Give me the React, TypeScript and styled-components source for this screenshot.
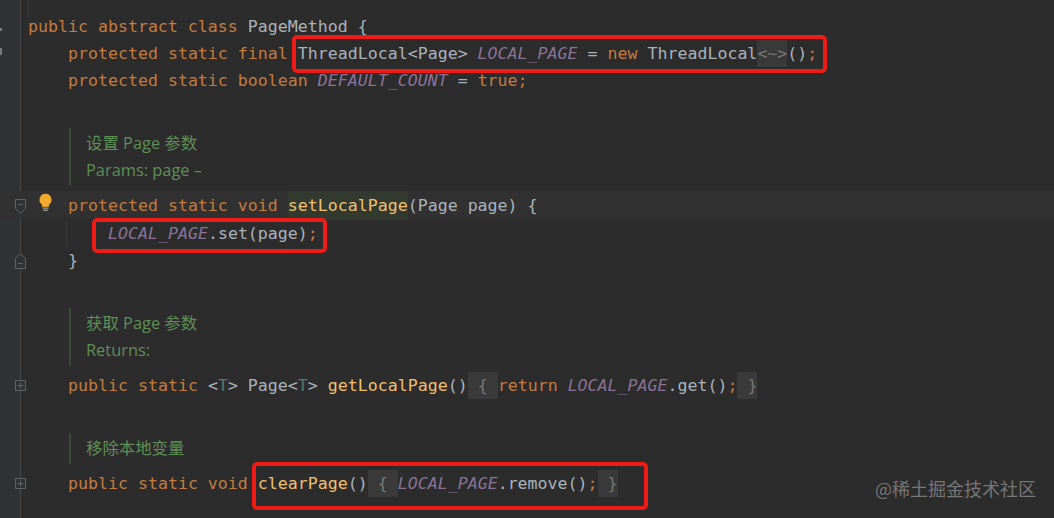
import styled, { createGlobalStyle } from "styled-components";

const GlobalStyle = createGlobalStyle`
  html, body {
    margin: 0;
    padding: 0;
    background: #2c2c2c;
  }
`;

const colors = {
  key: "#c27c42",
  plain: "#a9b3bd",
  constant: "#8b7299",
  method: "#f0c070",
  type: "#55786f",
  hint: "#787878",
};

const Editor = styled.div`
  position: relative;
  width: 1054px;
  height: 518px;
  overflow: hidden;
  box-sizing: border-box;
  padding-top: 13px;
  background: linear-gradient(
    to right,
    #313233 0,
    #313233 20px,
    #46484a 20px,
    #46484a 21px,
    #2c2c2c 21px
  );
  font-family: "DejaVu Sans Mono", "Liberation Mono", monospace;
  font-size: 16.6px;
  color: ${colors.plain};
`;

const Row = styled.div`
  position: relative;
  display: flex;
  height: 27px;
  line-height: 27px;
  white-space: pre;
`;

const CurrentRow = styled(Row)`
  height: 29px;
  line-height: 29px;
  background: linear-gradient(#313131 27px, transparent 27px);
`;

const Gutter = styled.div`
  position: relative;
  flex: none;
  width: 28px;
`;

const Code = styled.div<{ $indent?: number }>`
  padding-left: ${(p) => (p.$indent ?? 0) * 10}px;
`;

const Guide = styled.div<{ $left: number; $top?: number; $bottom?: number }>`
  position: absolute;
  top: ${(p) => p.$top ?? 0}px;
  bottom: ${(p) => p.$bottom ?? 0}px;
  left: ${(p) => p.$left}px;
  width: 1px;
  background: #393939;
`;

const Tok = styled.span<{ $c: keyof typeof colors; $italic?: boolean }>`
  color: ${(p) => colors[p.$c]};
  font-style: ${(p) => (p.$italic ? "italic" : "normal")};
`;

const Usage = styled.span`
  color: ${colors.method};
  background: #323a30;
  display: inline-block;
`;

const Folded = styled.span`
  display: inline-block;
  color: ${colors.hint};
  background: #3a3a3a;
`;

const Marked = styled.span<{ $t: number; $r: number; $b: number; $l: number }>`
  position: relative;
  display: inline-block;

  &::after {
    content: "";
    position: absolute;
    top: ${(p) => p.$t}px;
    right: ${(p) => p.$r}px;
    bottom: ${(p) => p.$b}px;
    left: ${(p) => p.$l}px;
    border: 4px solid #ee1c16;
    border-radius: 5px;
  }
`;

const DocBlock = styled.div<{ $gap: number; $after?: number }>`
  margin: ${(p) => p.$gap}px 0 ${(p) => p.$after ?? 6}px 69px;
  padding: 1px 0 3px 15px;
  border-left: 2px solid #3d4a3b;
  font-family: "Open Sans", "Noto Sans CJK SC", sans-serif;
  font-size: 16.4px;
  line-height: 27px;
  color: #5f8f57;
`;

const DocLine = styled.div`
  height: 27px;
`;

const FoldIcon = styled.svg`
  position: absolute;
  left: 14px;
  top: 5px;
  width: 13px;
  height: 18px;
  fill: #313233;
  stroke: #5f6264;
  stroke-width: 1;
`;

const Bulb = styled.svg`
  position: absolute;
  left: 38px;
  top: 2px;
  width: 15px;
  height: 19px;
`;

const EdgeMark = styled.div<{ $h: number; $top: number }>`
  position: absolute;
  left: 0;
  top: ${(p) => p.$top}px;
  width: 2px;
  height: ${(p) => p.$h}px;
  background: #77797b;
`;

const Watermark = styled.div`
  position: absolute;
  right: 18px;
  bottom: 18px;
  font-family: "Noto Sans CJK SC", "Noto Sans", sans-serif;
  font-size: 18px;
  line-height: 24px;
  color: #767676;
`;

const FoldOpen = () => (
  <FoldIcon viewBox="0 0 13 18">
    <path d="M1.5 3.5h10v9l-5 5-5-5z" />
    <path d="M4 8.5h5" />
  </FoldIcon>
);

const FoldClose = () => (
  <FoldIcon viewBox="0 0 13 18">
    <path d="M1.5 16.5h10v-10l-5-5-5 5z" />
    <path d="M4 11.5h5" />
  </FoldIcon>
);

const FoldPlus = () => (
  <FoldIcon viewBox="0 0 13 18">
    <path d="M1.5 3.5h10v10h-10z" />
    <path d="M3.5 8.5h6M6.5 5.5v6" />
  </FoldIcon>
);

export default function App() {
  return (
    <Editor>
      <GlobalStyle />
      <Row>
        <Gutter>
          <EdgeMark $top={15} $h={3} />
        </Gutter>
        <Guide $left={28} $top={-13} $bottom={22} />
        <Code>
          <Tok $c="key">public abstract class </Tok>PageMethod {"{"}
        </Code>
      </Row>
      <Row>
        <Gutter>
          <EdgeMark $top={8} $h={7} />
        </Gutter>
        <Code $indent={4}>
          <Tok $c="key">protected static final </Tok>
          <Marked $t={-5} $r={-10} $b={-6} $l={-6}>
            ThreadLocal&lt;Page&gt; <Tok $c="constant" $italic>LOCAL_PAGE</Tok> = <Tok $c="key">new </Tok>
            ThreadLocal<Folded>&lt;~&gt;</Folded>()<Tok $c="key">;</Tok>
          </Marked>
        </Code>
      </Row>
      <Row>
        <Gutter />
        <Code $indent={4}>
          <Tok $c="key">protected static boolean </Tok>
          <Tok $c="constant" $italic>DEFAULT_COUNT</Tok> = <Tok $c="key">true;</Tok>
        </Code>
      </Row>

      <DocBlock $gap={34} $after={5}>
        <DocLine>设置 Page 参数</DocLine>
        <DocLine>Params: page –</DocLine>
      </DocBlock>

      <CurrentRow>
        <Gutter>
          <FoldOpen />
        </Gutter>
        <Bulb viewBox="0 0 16 22">
          <path d="M8 1a7 7 0 0 0-4 12.7V16h8v-2.3A7 7 0 0 0 8 1z" fill="#f2ab2f" />
          <path d="M4.5 17.5h7M5.5 20h5" stroke="#9a9a9a" strokeWidth="1.6" />
        </Bulb>
        <Code $indent={4}>
          <Tok $c="key">protected static void </Tok>
          <Usage>setLocalPage</Usage>(Page page) {"{"}
        </Code>
      </CurrentRow>
      <Row>
        <Gutter />
        <Guide $left={66} />
        <Code $indent={8}>
          <Marked $t={-2} $r={-9} $b={-6} $l={-16}>
            <Tok $c="constant" $italic>LOCAL_PAGE</Tok>.set(page)<Tok $c="key">;</Tok>
          </Marked>
        </Code>
      </Row>
      <Row>
        <Gutter>
          <FoldClose />
        </Gutter>
        <Code $indent={4}>{"}"}</Code>
      </Row>

      <DocBlock $gap={34}>
        <DocLine>获取 Page 参数</DocLine>
        <DocLine>Returns:</DocLine>
      </DocBlock>

      <Row>
        <Gutter>
          <FoldPlus />
        </Gutter>
        <Code $indent={4}>
          <Tok $c="key">public static </Tok>&lt;<Tok $c="type">T</Tok>&gt; Page&lt;<Tok $c="type">T</Tok>&gt;{" "}
          <Tok $c="method">getLocalPage</Tok>()<Folded> {"{"} </Folded>
          <Tok $c="key">return </Tok>
          <Tok $c="constant" $italic>LOCAL_PAGE</Tok>.get()<Tok $c="key">;</Tok>
          <Folded> {"}"}</Folded>
        </Code>
      </Row>

      <DocBlock $gap={34}>
        <DocLine>移除本地变量</DocLine>
      </DocBlock>

      <Row>
        <Gutter>
          <FoldPlus />
        </Gutter>
        <Code $indent={4}>
          <Tok $c="key">public static void </Tok>
          <Marked $t={-8} $r={-30} $b={-13} $l={-6}>
            <Tok $c="method">clearPage</Tok>()<Folded> {"{"} </Folded>
            <Tok $c="constant" $italic>LOCAL_PAGE</Tok>.remove()<Tok $c="key">;</Tok>
            <Folded> {"}"}</Folded>
          </Marked>
        </Code>
      </Row>

      <Watermark>@稀土掘金技术社区</Watermark>
    </Editor>
  );
}
